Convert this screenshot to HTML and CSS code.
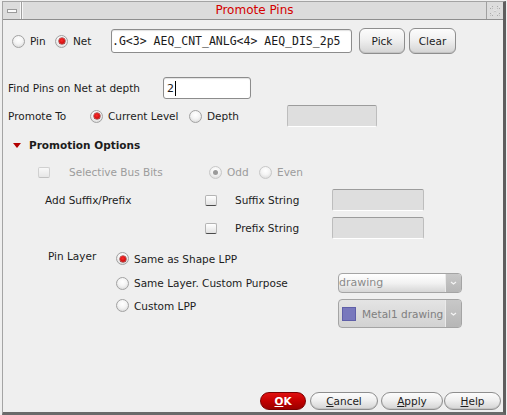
FILE: index.html
```html
<!DOCTYPE html>
<html>
<head>
<meta charset="utf-8">
<link rel="stylesheet" href="styles.css">
</head>
<body>
<div class="win">
  <div class="titlebar">
    <div class="tb-btn tb-min"><span class="min-bar"></span></div>
    <div class="tb-title">Promote Pins</div>
    <div class="tb-btn tb-close">
      <svg width="14" height="14" viewBox="0 0 14 14">
        <path d="M2 2 L5 5 M5 2 L2 5 M9 2 L12 5 M12 2 L9 5 M5.5 5.5 L8.5 8.5 M8.5 5.5 L5.5 8.5 M2 9 L5 12 M5 9 L2 12 M9 9 L12 12 M12 9 L9 12" stroke="#aaa" stroke-width="1" fill="none"/>
        <path d="M2 2 L12 12 M12 2 L2 12" stroke="#fff" stroke-width="1" stroke-dasharray="1 1" fill="none"/>
      </svg>
    </div>
  </div>
  <div class="body">
    <div class="row r1">
      <label class="radio w43"><span class="dot"></span><span>Pin</span></label>
      <label class="radio w56"><span class="dot on"></span><span>Net</span></label>
      <div class="entry net-entry"><span class="mono">.G&lt;3&gt; AEQ_CNT_ANLG&lt;4&gt; AEQ_DIS_2p5</span></div>
      <div class="btn pick">Pick</div>
      <div class="btn clear">Clear</div>
    </div>
    <div class="row r2">
      <span class="lbl w155">Find Pins on Net at depth</span>
      <div class="entry depth-entry"><span>2</span><span class="caret"></span></div>
    </div>
    <div class="row r3">
      <span class="lbl w82">Promote To</span>
      <label class="radio w99"><span class="dot on"></span><span>Current Level</span></label>
      <label class="radio w98"><span class="dot"></span><span>Depth</span></label>
      <div class="field depth-field"></div>
    </div>
    <div class="row r4">
      <span class="tri-cell"><svg width="8" height="5" viewBox="0 0 8 5"><path d="M0 0 H8 L4 5 Z" fill="#b30000"/></svg></span>
      <span class="section">Promotion Options</span>
    </div>
    <div class="row r5 dis">
      <label class="check w171"><span class="box dis-box"></span><span>Selective Bus Bits</span></label>
      <label class="radio w50"><span class="dot on-dis"></span><span>Odd</span></label>
      <label class="radio"><span class="dot dis-dot"></span><span>Even</span></label>
    </div>
    <div class="row r6">
      <span class="lbl w160">Add Suffix/Prefix</span>
      <label class="check w127"><span class="box"></span><span>Suffix String</span></label>
      <div class="field sfx"></div>
    </div>
    <div class="row r7">
      <label class="check w127"><span class="box"></span><span>Prefix String</span></label>
      <div class="field sfx"></div>
    </div>
    <div class="row r8">
      <span class="lbl w68 pinlayer">Pin Layer</span>
      <label class="radio"><span class="dot on"></span><span>Same as Shape LPP</span></label>
    </div>
    <div class="row r9">
      <label class="radio w222"><span class="dot"></span><span>Same Layer. Custom Purpose</span></label>
      <div class="combo c1">
        <span class="combo-text">drawing</span>
        <span class="combo-arrow"><svg width="7" height="4" viewBox="0 0 7 4"><path d="M1 1 L3.5 3 L6 1" stroke="#f4f4f4" stroke-width="1.2" fill="none"/></svg></span>
      </div>
    </div>
    <div class="row r10">
      <label class="radio w222"><span class="dot"></span><span>Custom LPP</span></label>
      <div class="combo c2">
        <span class="combo-main">
          <span class="swatch"></span>
          <span class="combo-text2">Metal1 drawing</span>
        </span>
        <span class="combo-arrow"><svg width="7" height="4" viewBox="0 0 7 4"><path d="M1 1 L3.5 3 L6 1" stroke="#f4f4f4" stroke-width="1.2" fill="none"/></svg></span>
      </div>
    </div>
    <div class="row actions">
      <div class="btn abtn ok"><u>O</u>K</div>
      <div class="btn abtn cancel"><u>C</u>ancel</div>
      <div class="btn abtn apply"><u>A</u>pply</div>
      <div class="btn abtn help"><u>H</u>elp</div>
    </div>
  </div>
</div>
</body>
</html>
```

FILE: styles.css
```css
* { box-sizing: border-box; }
html, body {
  margin: 0;
  padding: 0;
  background: #efefef;
  width: 507px;
  height: 415px;
  overflow: hidden;
}
body {
  font-family: "DejaVu Sans", sans-serif;
  font-size: 10.5px;
  color: #1c1c1c;
}
.win {
  margin: 1px 0 0 2px;
  width: 504px;
  height: 414px;
  border-left: 1px solid #a4a4a4;
  border-top: 1px solid #a4a4a4;
  border-right: 3px solid #5e5e5e;
  border-bottom: 3px solid #6a6a6a;
  background: #efefef;
  display: flex;
  flex-direction: column;
}
.titlebar {
  height: 18px;
  flex: none;
  display: flex;
  background: #dcdcdc;
  border-bottom: 1px solid #8e8e8e;
}
.tb-btn {
  width: 18px;
  height: 17px;
  flex: none;
  display: flex;
  align-items: center;
  justify-content: center;
}
.tb-min {
  border-right: 1px solid #a0a0a0;
  box-shadow: inset -1px 0 0 #f6f6f6;
  width: 19px;
}
.min-bar {
  width: 10px;
  height: 4px;
  background: #fafafa;
  border: 1px solid #9a9a9a;
}
.tb-close {
  border-left: 1px solid #a0a0a0;
  width: 17px;
}
.tb-title {
  flex: 1;
  text-align: center;
  color: #d40000;
  font-size: 12px;
  line-height: 17px;
  border-left: 1px solid #f6f6f6;
}
.body {
  flex: 1;
  display: flex;
  flex-direction: column;
  padding-bottom: 2px;
}
.row {
  display: flex;
  align-items: center;
  flex: none;
}
.r1 { margin-top: 8px; height: 26px; padding-left: 9px; }
.r2 { margin-top: 23px; height: 22px; padding-left: 5px; }
.r3 { margin-top: 6px; height: 22px; padding-left: 5px; }
.r4 { margin-top: 10px; height: 16px; padding-left: 7px; }
.r5 { margin-top: 11px; height: 16px; padding-left: 35px; }
.r6 { margin-top: 9px; height: 22px; padding-left: 42px; }
.r7 { margin-top: 6px; height: 22px; padding-left: 202px; }
.r8 { margin-top: 13px; height: 16px; padding-left: 45px; align-items: flex-start; }
.r9 { margin-top: 5px; height: 20px; padding-left: 113px; }
.r10 { margin-top: 6px; height: 29px; padding-left: 113px; align-items: flex-start; }
.actions {
  margin-top: auto;
  height: 18px;
  justify-content: flex-end;
  padding-right: 2px;
}

.w43 { width: 43px; }
.w56 { width: 56px; }
.w155 { width: 155px; }
.w82 { width: 82px; }
.w99 { width: 99px; }
.w98 { width: 98px; }
.w171 { width: 171px; }
.w50 { width: 50px; }
.w160 { width: 160px; }
.w127 { width: 127px; }
.w68 { width: 68px; }
.w222 { width: 222px; }

.lbl { flex: none; white-space: nowrap; }
.pinlayer { margin-top: -2px; }

.radio, .check {
  display: flex;
  align-items: center;
  flex: none;
  white-space: nowrap;
}
.dot {
  width: 13px;
  height: 13px;
  border-radius: 50%;
  border: 1px solid #a2a2a2;
  background: radial-gradient(circle at 50% 35%, #ffffff 0%, #f4f4f4 45%, #d2d2d2 100%);
  margin-right: 5px;
  display: flex;
  align-items: center;
  justify-content: center;
  flex: none;
}
.dot.on::after {
  content: "";
  width: 6px;
  height: 6px;
  border-radius: 50%;
  background: radial-gradient(circle at 45% 40%, #ff2a2a, #b00000);
  box-shadow: 0 0 0 0.5px #700;
}
.dot.on-dis { border-color: #c8c8c8; }
.dot.on-dis::after {
  content: "";
  width: 5px;
  height: 5px;
  border-radius: 50%;
  background: #9a9a9a;
}
.dot.dis-dot { border-color: #c8c8c8; }
.box {
  width: 12px;
  height: 11px;
  border: 1px solid #b4b4b4;
  border-bottom: 1px solid #4a4a4a;
  border-radius: 2px;
  background: linear-gradient(#ffffff, #e2e2e2);
  margin-right: 18px;
  flex: none;
}
.box.dis-box {
  border-color: #d0d0d0;
  border-bottom-color: #c0c0c0;
  background: linear-gradient(#f8f8f8, #e6e6e6);
  margin-right: 19px;
}
.dis { color: #9c9c9c; }

.entry {
  background: #fff;
  border: 1px solid #8c8c8c;
  border-radius: 3px;
  box-shadow: inset 0 1px 1px rgba(0,0,0,0.12);
  overflow: hidden;
  display: flex;
  align-items: center;
  white-space: nowrap;
  flex: none;
}
.net-entry {
  width: 241px;
  height: 24px;
  padding-left: 0;
}
.mono {
  font-family: "DejaVu Sans Mono", monospace;
  font-size: 11.5px;
  color: #1a1a1a;
}
.depth-entry {
  width: 88px;
  height: 22px;
  padding-left: 3px;
  font-size: 11px;
}
.caret {
  width: 1px;
  height: 15px;
  background: #000;
  margin-left: 1px;
}
.field {
  flex: none;
  background: #dedede;
  border: 1px solid #bdbdbd;
  border-top-color: #9c9c9c;
  border-bottom-color: #ffffff;
  border-radius: 2px;
}
.depth-field { width: 90px; height: 22px; }
.sfx { width: 92px; height: 22px; }

.tri-cell {
  width: 19px;
  display: flex;
  align-items: center;
  padding-left: 3px;
  flex: none;
}
.section { font-weight: bold; }

.btn {
  flex: none;
  display: flex;
  align-items: center;
  justify-content: center;
  border: 1px solid #8e8e8e;
  border-radius: 6px;
  background: linear-gradient(#fcfcfc 0%, #f0f0f0 45%, #d4d4d4 100%);
  box-shadow: inset 0 -1px 0 #c4c4c4;
  color: #1c1c1c;
}
.pick { width: 46px; height: 26px; margin-left: 7px; }
.clear { width: 47px; height: 26px; margin-left: 4px; }
.abtn { height: 18px; border-radius: 9px; }
.abtn u { text-decoration: underline; text-underline-offset: 1px; }
.ok {
  width: 46px;
  background: linear-gradient(#e01010 0%, #c40000 50%, #9a0000 100%);
  border-color: #7a0000;
  color: #fff;
  font-weight: bold;
  box-shadow: none;
}
.cancel { width: 68px; margin-left: 4px; }
.apply { width: 62px; margin-left: 3px; }
.help { width: 57px; margin-left: 1px; }

.combo {
  width: 124px;
  flex: none;
  display: flex;
  border: 1px solid #a4a4a4;
  border-radius: 4px;
  overflow: hidden;
}
.c1 {
  height: 20px;
  background: linear-gradient(#ffffff 0%, #f2f2f2 50%, #d6d6d6 100%);
}
.c2 {
  height: 29px;
  background: linear-gradient(#e4e4e4, #d2d2d2);
}
.combo-text {
  flex: 1;
  color: #8a8a8a;
  font-size: 11px;
  line-height: 18px;
  padding-left: 0;
  white-space: nowrap;
}
.combo-main {
  flex: 1;
  min-width: 0;
  display: flex;
  align-items: center;
  padding-left: 3px;
  white-space: nowrap;
  overflow: hidden;
}
.swatch {
  width: 14px;
  height: 14px;
  border: 1px solid #5f5fa8;
  background-color: #8585c8;
  background-image: radial-gradient(#6a6ab0 0.6px, transparent 0.8px);
  background-size: 2px 2px;
  margin-right: 6px;
  flex: none;
}
.combo-text2 {
  color: #808080;
  font-size: 10.5px;
  white-space: nowrap;
}
.combo-arrow {
  width: 16px;
  flex: none;
  display: flex;
  align-items: center;
  justify-content: center;
  background: linear-gradient(#c8c8c8, #b6b6b6);
  border-left: 1px solid #eaeaea;
}
```
